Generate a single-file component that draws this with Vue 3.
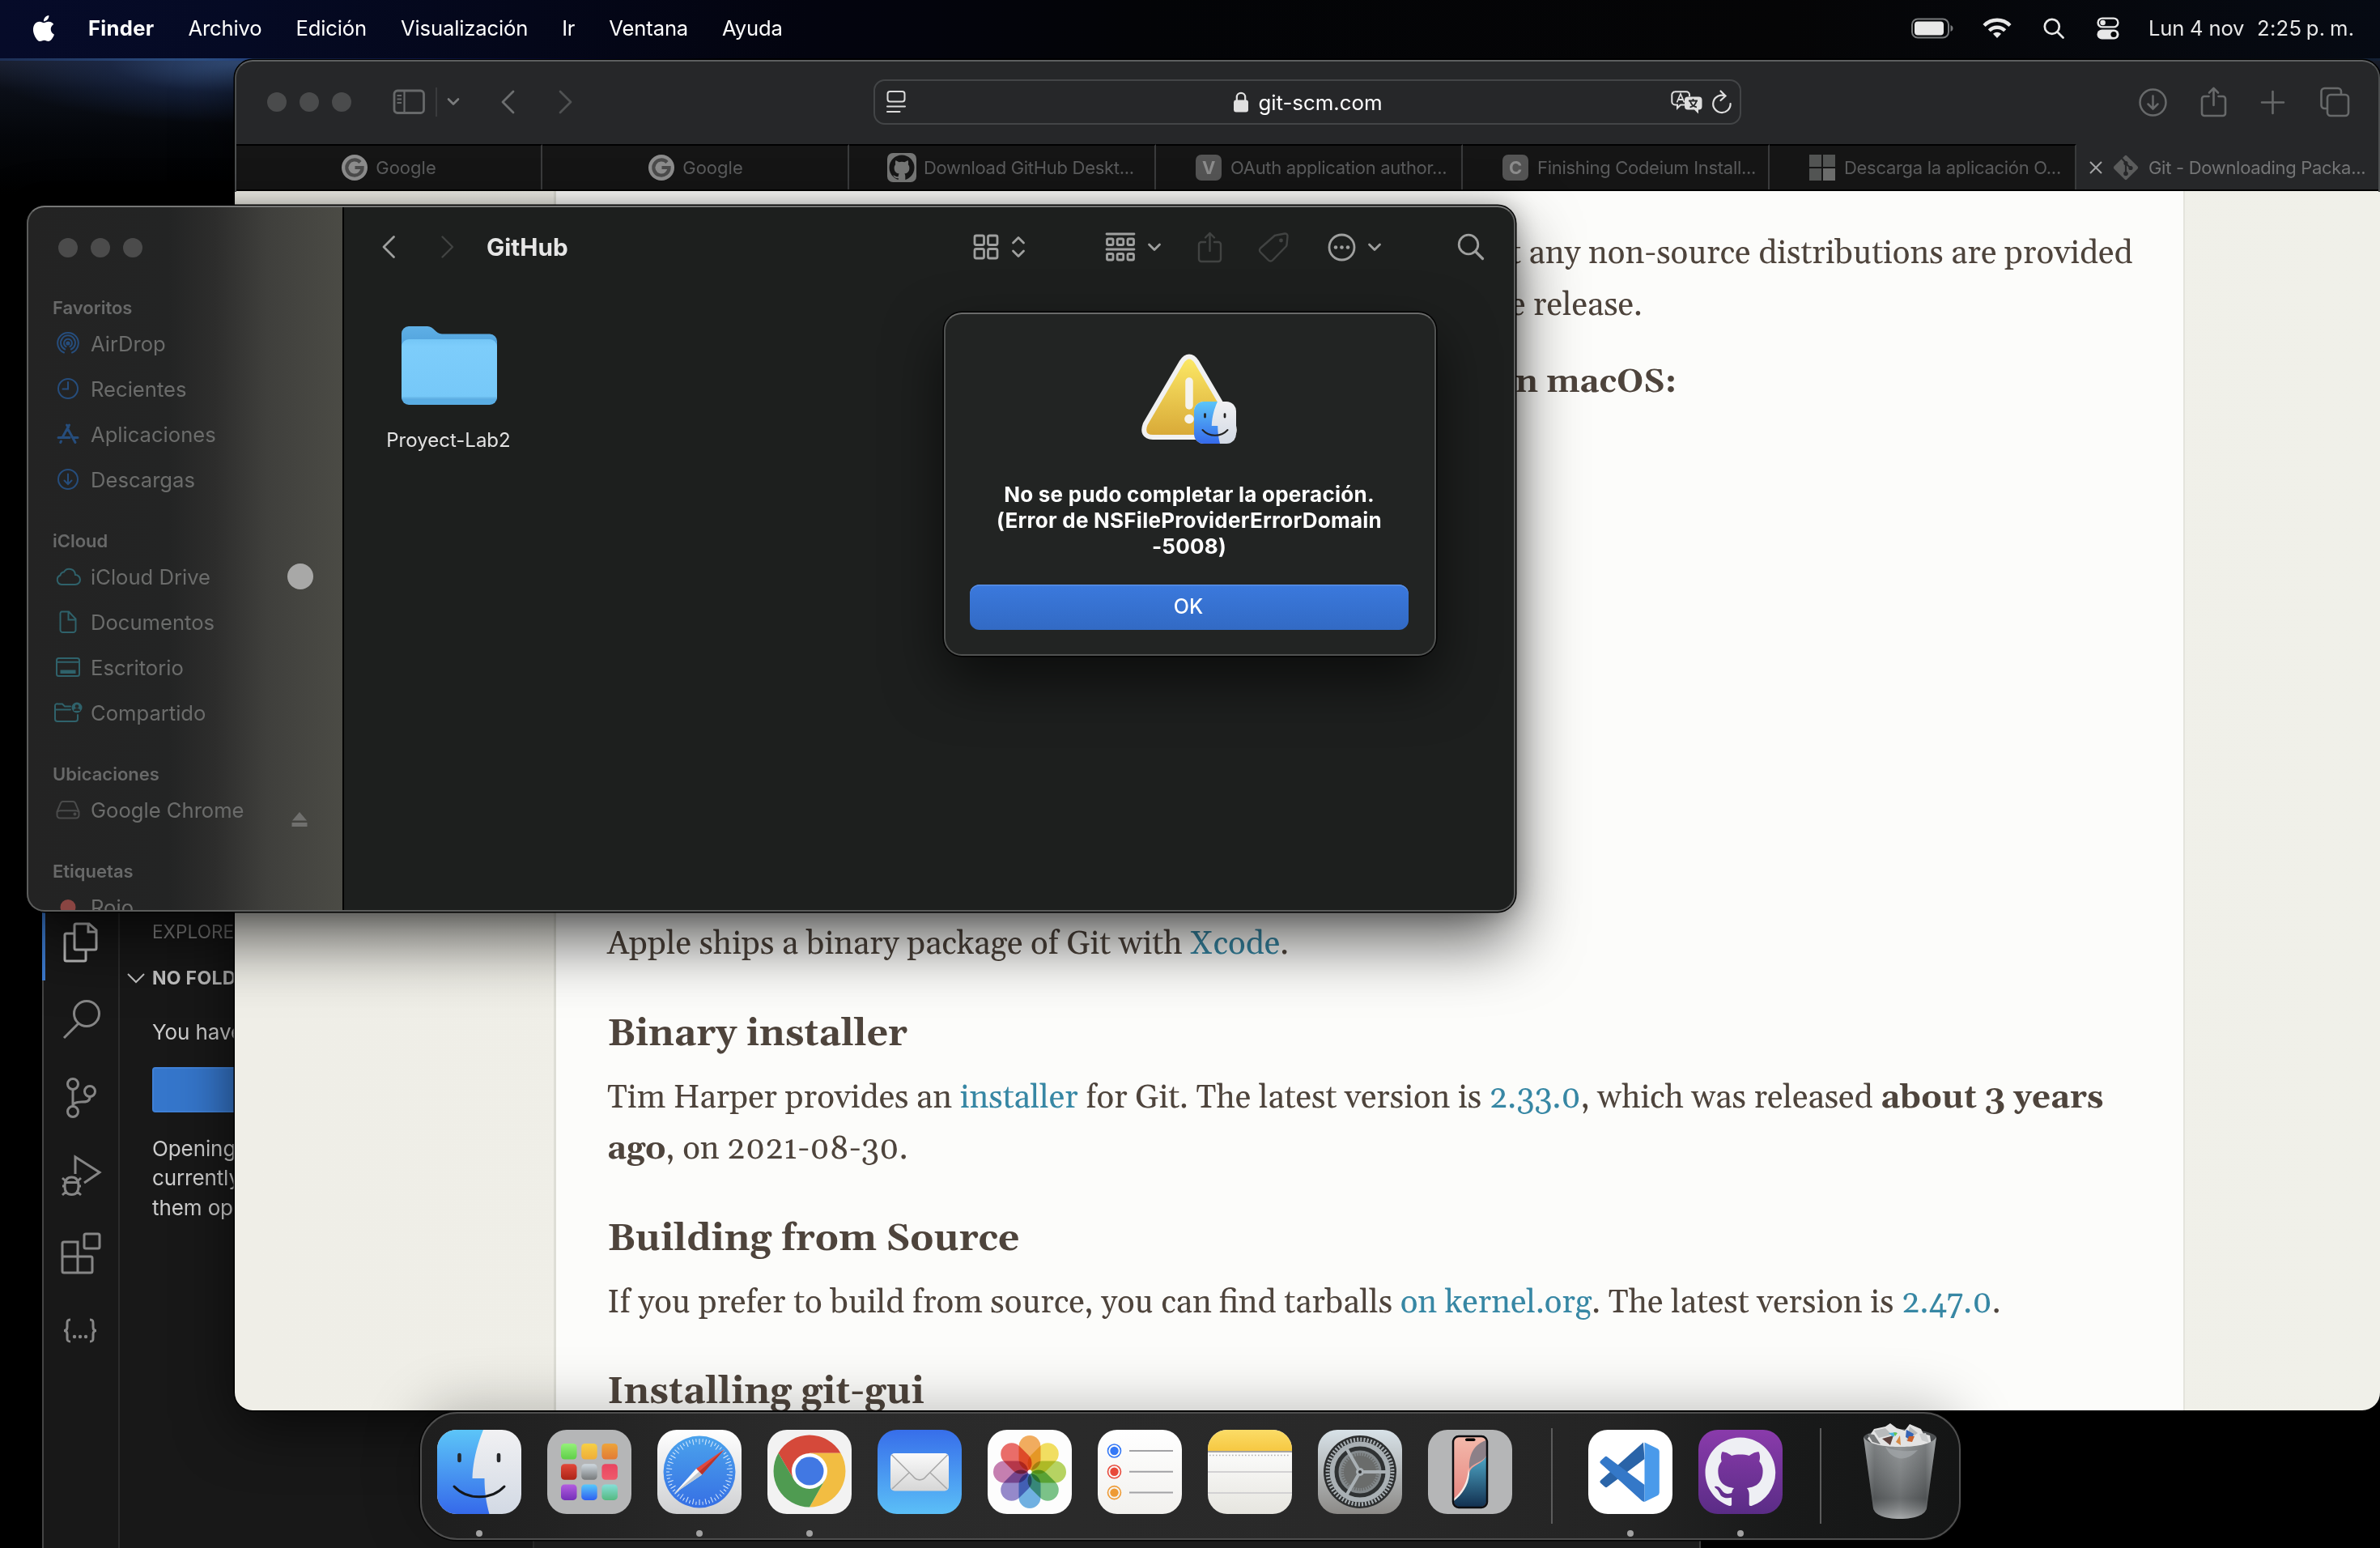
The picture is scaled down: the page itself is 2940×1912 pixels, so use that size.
<script setup>
const menus = ['Archivo', 'Edición', 'Visualización', 'Ir', 'Ventana', 'Ayuda']

const octocat =
  'M8 0C3.58 0 0 3.58 0 8c0 3.54 2.29 6.53 5.47 7.59.4.07.55-.17.55-.38 0-.19-.01-.82-.01-1.49-2.01.37-2.53-.49-2.69-.94-.09-.23-.48-.94-.82-1.13-.28-.15-.68-.52-.01-.53.63-.01 1.08.58 1.23.82.72 1.21 1.87.87 2.33.66.07-.52.28-.87.51-1.07-1.78-.2-3.64-.89-3.64-3.95 0-.87.31-1.59.82-2.15-.08-.2-.36-1.02.08-2.12 0 0 .67-.21 2.2.82.64-.18 1.32-.27 2-.27s1.36.09 2 .27c1.53-1.04 2.2-.82 2.2-.82.44 1.1.16 1.92.08 2.12.51.56.82 1.27.82 2.15 0 3.07-1.87 3.75-3.65 3.95.29.25.54.73.54 1.48 0 1.07-.01 1.93-.01 2.2 0 .21.15.46.55.38A8.01 8.01 0 0 0 16 8c0-4.42-3.58-8-8-8z'

const tabs = [
  { icon: 'google', title: 'Google' },
  { icon: 'google', title: 'Google' },
  { icon: 'github', title: 'Download GitHub Deskt...' },
  { icon: 'letter', letter: 'V', title: 'OAuth application author...' },
  { icon: 'letter', letter: 'C', title: 'Finishing Codeium Install...' },
  { icon: 'windows', title: 'Descarga la aplicación O...' },
  { icon: 'git', title: 'Git - Downloading Packa...', active: true },
]

const circle = '<circle cx="15" cy="15" r="12"/>'
const groups = [
  {
    title: 'Favoritos',
    tone: 'blue',
    items: [
      {
        label: 'AirDrop',
        icon: '<path d="M10 26.5a12.8 12.8 0 1 1 10 0M11.2 22.5a9 9 0 1 1 7.600 0M12.500 19.200a5 5 0 1 1 5 0"/><circle cx="15" cy="15" r="1.600" fill="currentColor"/>',
      },
      { label: 'Recientes', icon: circle + '<path d="M15 7v8.500H8.500"/>' },
      {
        label: 'Aplicaciones',
        icon: '<g stroke-width="3"><path d="M13.500 4l2 3M16.500 4L8.500 18.500M3 19.500h14M21 19.500h6M15.500 10l8.500 15.500M6.500 24l-.8 1.500"/></g>',
      },
      { label: 'Descargas', icon: circle + '<path d="M15 8.500v12M10.500 16.500l4.500 4.500 4.500-4.500"/>' },
    ],
  },
  {
    title: 'iCloud',
    tone: 'teal',
    items: [
      {
        label: 'iCloud Drive',
        extra: 'dot',
        icon: '<path d="M7 25a6 6 0 0 1-1.500-11.500A5 5 0 0 1 10 9.500a7.500 7.500 0 0 1 14 3.500 6 6 0 0 1 0 12z"/>',
      },
      {
        label: 'Documentos',
        icon: '<path d="M7 2.500h9l8.500 9V25a3 3 0 0 1-3 3H8.500a3 3 0 0 1-3-3V5a2.500 2.500 0 0 1 1.500-2.500zM15.500 3v9.500H24"/>',
      },
      {
        label: 'Escritorio',
        icon: '<rect x="1" y="4" width="28" height="22" rx="2.500"/><path d="M1 8.800h28"/><rect x="6.500" y="19.500" width="17" height="2.500" fill="currentColor"/>',
      },
      {
        label: 'Compartido',
        icon: '<path d="M18 7.500h-7L8 4.500H2.500A2.500 2.500 0 0 0-1 7v16a3 3 0 0 0 3 3h22a3 3 0 0 0 3-3v-5M0 11.500h18"/><circle cx="26" cy="9" r="6.500" fill="currentColor" stroke="none"/><g fill="#262827" stroke="none"><circle cx="26" cy="7.500" r="2.300"/><path d="M22 13a4 3 0 0 1 8 0z"/></g>',
      },
    ],
  },
  {
    title: 'Ubicaciones',
    tone: 'gray',
    items: [
      {
        label: 'Google Chrome',
        extra: 'eject',
        icon: '<path d="M8.500 5h13a3 3 0 0 1 2.500 2l4.500 10.500V22a3.500 3.500 0 0 1-3.500 3.500H5A3.500 3.500 0 0 1 1.500 22v-4.500L6 7a3 3 0 0 1 2.500-2zM2 17.500c1-.8 2-1.300 3.500-1.300h19c1.500 0 2.500.5 3.500 1.300"/><circle cx="23.500" cy="20.500" r="1" fill="currentColor"/>',
      },
    ],
  },
  { title: 'Etiquetas', tone: 'red', items: [{ label: 'Rojo', icon: '<circle cx="15" cy="15.500" r="9.500" fill="currentColor" stroke="none"/>' }] },
]

const activity = [
  '<path d="M17 15V5a2 2 0 0 1 2-2h16l9 8v22a2 2 0 0 1-2 2H19a2 2 0 0 1-2-2V15H7a2 2 0 0 0-2 2v30a2 2 0 0 0 2 2h22a2 2 0 0 0 2-2V36M34 3v10h10"/>',
  '<circle cx="32" cy="18" r="15.500"/><path d="M22 30L4 48"/>',
  '<circle cx="15" cy="9" r="6.500"/><circle cx="15" cy="43" r="6.500"/><circle cx="36" cy="18" r="6.500"/><path d="M15 16v20M36 25c0 6-5 6-10 6s-11 1-11 5"/>',
  '<path d="M18 24V3l30 19-19 13"/><path d="M5 39c0-7 3-11 8.500-11S22 32 22 39s-3 10.500-8.500 10.500S5 46 5 39zM5 34.500h17M2 39h3M22 39h3M2 29l4.500 4M25 29l-4.500 4M2 50l4.500-4M25 50l-4.500-4"/>',
  '<path d="M4 12h17v18h16a2 2 0 0 1 2 2v16a2 2 0 0 1-2 2H4a2 2 0 0 1-2-2V14a2 2 0 0 1 2-2zM2 30h19v20M21 30V14"/><rect x="29" y="2" width="19" height="18" rx="2"/>',
  '<path d="M12 12c-4 0-4 2-4 5v4c0 3-1 4.500-4 4.500 3 0 4 1.500 4 4.500v4c0 3 0 5 4 5M36 12c4 0 4 2 4 5v4c0 3 1 4.500 4 4.500-3 0-4 1.500-4 4.500v4c0 3 0 5-4 5"/><g fill="currentColor" stroke="none"><circle cx="17" cy="33" r="2.200"/><circle cx="24" cy="33" r="2.200"/><circle cx="31" cy="33" r="2.200"/></g>',
]

const ticks = Array.from({ length: 60 }, (_, i) => i * 6)
const petals = ['#f09a38', '#f0d93a', '#a6cb3c', '#5bb56b', '#4d9fdc', '#7c6cc0', '#b9609f', '#e64a45']
const launchpad = [
  ['#95f07a', '#5fcf48'], ['#f6cf45', '#efae38'], ['#eda43a', '#e27b35'],
  ['#e2483a', '#ac2417'], ['#cfd8df', '#777a7b'], ['#e94560', '#ef5b6c'],
  ['#b35de0', '#7430b8'], ['#58c9fb', '#2f5ff0'], ['#86dfd8', '#55b981'],
]
const reminders = ['#3478f6', '#e8493a', '#ee9a33']
</script>

<template>
  <div class="desktop">
    <!-- Menu bar -->
    <header class="menubar">
      <svg class="apple" viewBox="0 0 24 24"><path fill="#fff" d="M12.152 6.896c-.948 0-2.415-1.078-3.960-1.040-2.040.027-3.910 1.183-4.961 3.014-2.117 3.675-.546 9.103 1.519 12.090 1.013 1.454 2.208 3.090 3.792 3.039 1.520-.065 2.090-.987 3.935-.987 1.831 0 2.350.987 3.960.948 1.637-.026 2.676-1.480 3.676-2.948 1.156-1.688 1.636-3.325 1.662-3.415-.039-.013-3.182-1.221-3.220-4.857-.026-3.040 2.480-4.494 2.597-4.559-1.429-2.090-3.623-2.324-4.390-2.376-2-.156-3.675 1.090-4.610 1.090zM15.530 3.830c.843-1.012 1.400-2.427 1.245-3.830-1.207.052-2.662.805-3.532 1.818-.780.896-1.454 2.338-1.273 3.714 1.338.104 2.715-.688 3.559-1.701" /></svg>
      <span class="app-name">Finder</span>
      <span v-for="m in menus" :key="m">{{ m }}</span>
      <div class="status">
        <svg width="52" height="26" viewBox="0 0 52 26"><rect x="1" y="1.500" width="45" height="23" rx="7" fill="none" stroke="#77797b" stroke-width="2" /><rect x="4" y="4.500" width="36" height="17" rx="4" fill="#e8e8e8" /><path d="M48.500 9v8c2-.7 3-2 3-4s-1-3.300-3-4z" fill="#77797b" /></svg>
        <svg class="wifi" width="36" height="27" viewBox="0 0 36 27"><g fill="none" stroke="#e8e8e8" stroke-width="4.400"><path d="M2 10.500a22.500 22.500 0 0 1 32 0" /><path d="M8.300 16.800a13.700 13.700 0 0 1 19.400 0" /></g><path d="M18 26l-5-5.300a7.200 7.200 0 0 1 10 0z" fill="#e8e8e8" /></svg>
        <svg class="find" width="26" height="26" viewBox="0 0 26 26"><g fill="none" stroke="#e8e8e8" stroke-width="2.700" stroke-linecap="round"><circle cx="10.800" cy="10.800" r="9" /><path d="M17.500 17.500l7 7" /></g></svg>
        <svg class="cc" width="28" height="28" viewBox="0 0 28 28"><rect x="1.600" y="1.600" width="24.800" height="10.800" rx="5.400" fill="none" stroke="#e8e8e8" stroke-width="2.400" /><circle cx="7.600" cy="7" r="3.300" fill="#e8e8e8" /><rect x=".5" y="15.500" width="27" height="12" rx="6" fill="#e8e8e8" /><circle cx="21" cy="21.500" r="3.600" fill="#050608" /></svg>
        <span class="date">Lun 4 nov</span>
        <span class="time">2:25 p. m.</span>
      </div>
    </header>

    <!-- Code editor behind the other windows -->
    <section class="editor">
      <nav class="activity">
        <svg v-for="(a, i) in activity" :key="i" :class="{ current: i === 0 }" width="50" height="52" viewBox="0 0 50 52" v-html="a" />
      </nav>
      <div class="explorer">
        <div class="ex-title">EXPLORER</div>
        <div class="ex-section">
          <svg width="22" height="14" viewBox="0 0 22 14"><path d="M1 2l10 10L21 2" fill="none" stroke="#c4c4c4" stroke-width="2" /></svg>
          <b>NO FOLDER</b>
        </div>
        <p class="ex-note">You have</p>
        <div class="ex-button"></div>
        <p class="ex-text">Opening<br />currently<br />them open</p>
      </div>
      <div class="editor-main"></div>
    </section>

    <!-- Safari -->
    <section class="safari">
      <div class="toolbar">
        <i class="light"></i><i class="light"></i><i class="light"></i>
        <svg class="t-side" width="42" height="34" viewBox="0 0 42 34"><g fill="none" stroke="#67696a" stroke-width="2.800"><rect x="3" y="3" width="36.500" height="27.500" rx="4" /><path d="M15.500 3v27.500" stroke-width="2.200" /><path d="M6.500 9h5.500M6.500 13.500h5.500M6.500 18h5.500" stroke-width="1.800" /></g></svg>
        <i class="t-rule"></i>
        <svg class="t-drop" width="16" height="12" viewBox="0 0 16 12"><path d="M2 2.500l6 6 6-6" fill="none" stroke="#7b7d7e" stroke-width="2.600" stroke-linecap="round" stroke-linejoin="round" /></svg>
        <svg class="t-back" width="18" height="30" viewBox="0 0 18 30"><path d="M16 2L3 15l13 13" fill="none" stroke="#6d6f70" stroke-width="2.800" stroke-linecap="round" stroke-linejoin="round" /></svg>
        <svg class="t-fwd" width="18" height="30" viewBox="0 0 18 30"><path d="M2 2l13 13L2 28" fill="none" stroke="#505253" stroke-width="2.800" stroke-linecap="round" stroke-linejoin="round" /></svg>
        <div class="address">
          <svg width="24" height="28" viewBox="0 0 24 28"><g fill="none" stroke="#dcdcdc" stroke-width="2"><rect x="1.500" y="1" width="21" height="12.500" rx="3" /><path d="M1 19.500h22M1 26h15.500" stroke-linecap="round" /></g></svg>
          <div class="host">
            <svg width="20" height="26" viewBox="0 0 20 26"><rect x="1" y="10.500" width="18" height="15" rx="3" fill="#e0e0e0" /><path d="M4.800 11V7a5.200 5.200 0 0 1 10.400 0v4" fill="none" stroke="#e0e0e0" stroke-width="2.200" /></svg>
            <span>git-scm.com</span>
          </div>
          <svg width="40" height="29" viewBox="0 0 40 29"><path d="M5 1.300h14a4 4 0 0 1 4 4v2M17 17.500h-5l-4 4v-4H5.300a4 4 0 0 1-4-4V5.300a4 4 0 0 1 4-4" fill="none" stroke="#dedede" stroke-width="2" /><path d="M7.500 14.500L12 4l4.500 10.500M9 11h6" fill="none" stroke="#dedede" stroke-width="1.800" /><path d="M21 7.500h13.500a4 4 0 0 1 4 4v8a4 4 0 0 1-4 4H34v5l-5-5h-8a4 4 0 0 1-4-4v-8a4 4 0 0 1 4-4z" fill="#dedede" /><path d="M22 12.500h11M27.500 10v2.500M24 13c1 4 4 6.500 8 7.500M31.500 13c-1 4-4 6.500-8 7.500" fill="none" stroke="#262729" stroke-width="1.800" /></svg>
          <svg class="reload" width="26" height="30" viewBox="0 0 26 30"><path d="M17 7.500A10.700 10.700 0 1 0 23.600 17M11.500 1.500l6 6-6 5.500" fill="none" stroke="#dedede" stroke-width="2.200" stroke-linecap="round" /></svg>
        </div>
        <svg class="t-down" width="37" height="37" viewBox="0 0 37 37"><g fill="none" stroke="#67696a" stroke-width="2.500" stroke-linecap="round"><circle cx="18.500" cy="18.500" r="16" /><path d="M18.500 10.500v15.500M12.500 20.500l6 6 6-6" /></g></svg>
        <svg class="t-share" width="35" height="40" viewBox="0 0 35 40"><g fill="none" stroke="#67696a" stroke-width="2.600" stroke-linecap="round" stroke-linejoin="round"><path d="M11.500 13H6a3 3 0 0 0-3 3v18a3 3 0 0 0 3 3h23a3 3 0 0 0 3-3V16a3 3 0 0 0-3-3h-5.500M17.500 24V3M12 8.500L17.500 3 23 8.500" /></g></svg>
        <svg class="t-plus" width="31" height="31" viewBox="0 0 31 31"><path d="M15.500 2v27M2 15.500h27" fill="none" stroke="#67696a" stroke-width="2.600" stroke-linecap="round" /></svg>
        <svg class="t-tabs" width="38" height="38" viewBox="0 0 38 38"><g fill="none" stroke="#67696a" stroke-width="2.600"><path d="M10 27H6.500A4 4 0 0 1 2.500 23V6a4 4 0 0 1 4-4H23a4 4 0 0 1 4 4v3" /><rect x="10" y="10" width="26" height="26" rx="4" /></g></svg>
      </div>
      <div class="tabs">
        <div v-for="(t, i) in tabs" :key="i" class="tab" :class="[t.icon, { active: t.active }]">
          <svg v-if="t.active" class="close" width="18" height="18" viewBox="0 0 18 18"><path d="M2 2l14 14M16 2L2 16" stroke="#a3a4a5" stroke-width="2" /></svg>
          <svg width="36" height="36" viewBox="0 0 36 36">
            <template v-if="t.icon === 'google'">
              <circle cx="18" cy="18" r="16" fill="#8c8c8c" />
              <path d="M25 11.500A9.600 9.600 0 1 0 27.600 18H18.500" fill="none" stroke="#4b4b4b" stroke-width="4.200" />
            </template>
            <template v-else-if="t.icon === 'github'">
              <rect width="36" height="36" rx="7" fill="#757675" />
              <circle cx="18" cy="18" r="15.500" fill="#151515" />
              <path d="M10.500 9l4 2.200a14 14 0 0 1 7 0l4-2.200c.8 2 .7 3.500.3 5 1.500 2 1.700 3.500 1.500 5.500-.4 4-2.800 5.500-6 6 .8 1 1 2 1 3.500V35h-8.600v-4c-4 .7-5-1.500-6.700-3.500 3 0 3 2.500 6.700 1.500.1-1.500.4-2.500 1-3.500-3.200-.5-5.600-2-6-6-.2-2 0-3.500 1.500-5.500-.4-1.500-.5-3 .3-5z" fill="#757675" />
            </template>
            <template v-else-if="t.icon === 'letter'">
              <rect x="2" y="2" width="32" height="32" rx="7" fill="#545454" />
              <text x="18" y="26" text-anchor="middle" class="glyph">{{ t.letter }}</text>
            </template>
            <template v-else-if="t.icon === 'windows'">
              <path d="M2 2h15v15H2zM19 2h15v15H19zM2 19h15v15H2z" fill="#525453" />
              <path d="M19 19h15v15H19z" fill="#6b6c6b" />
            </template>
            <template v-else>
              <rect x="6.700" y="6.700" width="22.600" height="22.600" rx="2" transform="rotate(45 18 18)" fill="#5b5c5c" />
              <path d="M13 6.500l5 5.500v14M18 13l6 5.500" fill="none" stroke="#262729" stroke-width="2.200" />
              <g fill="#262729"><circle cx="18" cy="12.500" r="2.600" /><circle cx="18" cy="25.500" r="2.800" /><circle cx="24" cy="18.500" r="2.600" /></g>
            </template>
          </svg>
          <span>{{ t.title }}</span>
        </div>
      </div>
      <div class="page">
        <article>
          <p class="intro">t any non-source distributions are provided<br />e release.</p>
          <h4>n macOS:</h4>
          <p class="apple-line">Apple ships a binary package of Git with <a>Xcode</a>.</p>
          <h3>Binary installer</h3>
          <p>Tim Harper provides an <a>installer</a> for Git. The latest version is <a>2.33.0</a>, which was released <b>about 3 years</b><br /><b>ago</b>, on 2021-08-30.</p>
          <h3>Building from Source</h3>
          <p>If you prefer to build from source, you can find tarballs <a>on kernel.org</a>. The latest version is <a>2.47.0</a>.</p>
          <h3>Installing git-gui</h3>
        </article>
      </div>
    </section>

    <!-- Finder -->
    <section class="finder">
      <aside>
        <div class="lights"><i class="light"></i><i class="light"></i><i class="light"></i></div>
        <div v-for="g in groups" :key="g.title" class="group" :class="g.tone">
          <h5>{{ g.title }}</h5>
          <div v-for="it in g.items" :key="it.label" class="entry">
            <svg width="30" height="30" viewBox="0 0 30 30" v-html="it.icon" />
            <span>{{ it.label }}</span>
            <i v-if="it.extra === 'dot'" class="dot"></i>
            <svg v-if="it.extra === 'eject'" class="eject" width="20" height="20" viewBox="0 0 20 20"><path d="M10 1l9 10.500H1zM.5 14h19v5H.5z" /></svg>
          </div>
        </div>
      </aside>
      <main>
        <div class="f-bar">
          <svg class="f-back" width="18" height="30" viewBox="0 0 18 30"><path d="M15.500 2.500L3 15l12.500 12.500" /></svg>
          <svg class="f-fwd faint" width="18" height="30" viewBox="0 0 18 30"><path d="M2.500 2.500L15 15 2.500 27.500" /></svg>
          <strong>GitHub</strong>
          <svg class="f-grid" width="32" height="32" viewBox="0 0 32 32"><rect x="2" y="2" width="11.500" height="11.500" rx="2" /><rect x="18.500" y="2" width="11.500" height="11.500" rx="2" /><rect x="2" y="18.500" width="11.500" height="11.500" rx="2" /><rect x="18.500" y="18.500" width="11.500" height="11.500" rx="2" /></svg>
          <svg class="f-ud" width="18" height="28" viewBox="0 0 18 28"><path d="M2.500 9L9 2.500 15.500 9M2.500 19L9 25.500l6.500-6.500" /></svg>
          <svg class="f-group" width="38" height="36" viewBox="0 0 38 36"><path d="M2 2h34M2 21h34" /><rect x="2.500" y="8" width="7.500" height="7.500" rx="1.500" /><rect x="15.200" y="8" width="7.500" height="7.500" rx="1.500" /><rect x="28" y="8" width="7.500" height="7.500" rx="1.500" /><rect x="2.500" y="26.500" width="7.500" height="7.500" rx="1.500" /><rect x="15.200" y="26.500" width="7.500" height="7.500" rx="1.500" /><rect x="28" y="26.500" width="7.500" height="7.500" rx="1.500" /></svg>
          <svg class="f-drop" width="18" height="14" viewBox="0 0 18 14"><path d="M2.500 4L9 10.500 15.500 4" /></svg>
          <svg class="f-share faint" width="31" height="40" viewBox="0 0 31 40"><path d="M10 14H5a3 3 0 0 0-3 3v18a3 3 0 0 0 3 3h21a3 3 0 0 0 3-3V17a3 3 0 0 0-3-3h-5M15.500 25V3M10 8.500L15.500 3 21 8.500" /></svg>
          <svg class="f-tag faint" width="39" height="39" viewBox="0 0 39 39"><path d="M22.500 4.500L33 2.500a3 3 0 0 1 3.500 3.500l-1 10.500a4 4 0 0 1-1 2L18 35.500a3.500 3.500 0 0 1-5 0L3 25.500a3.500 3.500 0 0 1 0-5L20 5.500a4 4 0 0 1 2.500-1z" /><circle cx="28.500" cy="11" r="1.200" /></svg>
          <svg class="f-more" width="35" height="35" viewBox="0 0 35 35"><circle cx="17.500" cy="17.500" r="15.500" /><g stroke="none" fill="#9fa09f"><circle cx="10" cy="17.500" r="2.300" /><circle cx="17.500" cy="17.500" r="2.300" /><circle cx="25" cy="17.500" r="2.300" /></g></svg>
          <svg class="f-drop" width="18" height="14" viewBox="0 0 18 14"><path d="M2.500 4L9 10.500 15.500 4" /></svg>
          <svg class="f-find" width="34" height="34" viewBox="0 0 34 34"><circle cx="14" cy="14" r="11.800" /><path d="M22.500 22.500l9 9" stroke-width="3.200" /></svg>
        </div>
        <div class="folder">
          <svg width="122" height="102" viewBox="0 0 122 102">
            <defs>
              <linearGradient id="fb" x1="0" y1="0" x2="0" y2="1"><stop offset="0" stop-color="#5fb0e6" /><stop offset="1" stop-color="#3f8fd0" /></linearGradient>
              <linearGradient id="ff" x1="0" y1="0" x2="0" y2="1"><stop offset="0" stop-color="#74c6f6" /><stop offset=".12" stop-color="#7dcdfb" /><stop offset="1" stop-color="#76c8f8" /></linearGradient>
            </defs>
            <path d="M2 12a9 9 0 0 1 9-9h23c8 0 10 9.500 18 9.500h59a9 9 0 0 1 9 9V60H2z" fill="url(#fb)" />
            <rect x="2" y="40" width="118" height="60" rx="9" fill="#5aade3" />
            <path d="M11 19h100a9 9 0 0 1 9 9v64H2V28a9 9 0 0 1 9-9z" fill="url(#ff)" />
            <path d="M2 91.500h118" stroke="#66b6e8" stroke-width="2" />
          </svg>
          <span>Proyect-Lab2</span>
        </div>
      </main>

      <div class="dialog">
        <svg width="122" height="118" viewBox="0 0 122 118">
          <defs>
            <linearGradient id="wy" x1="0" y1="0" x2="0" y2="1"><stop offset="0" stop-color="#fbe765" /><stop offset="1" stop-color="#d9aa38" /></linearGradient>
            <linearGradient id="fblue" x1="0" y1="0" x2="0" y2="1"><stop offset="0" stop-color="#5cc5f8" /><stop offset="1" stop-color="#3569ea" /></linearGradient>
            <linearGradient id="fwhite" x1="0" y1="0" x2="0" y2="1"><stop offset="0" stop-color="#f1f1f3" /><stop offset="1" stop-color="#d2d9e4" /></linearGradient>
          </defs>
          <path d="M54 17Q61 6 68 17L112.500 93Q117 105 106 105H16Q5 105 9.500 93Z" fill="none" stroke="#f1f1f1" stroke-width="12" stroke-linejoin="round" />
          <path d="M54 17Q61 6 68 17L112.500 93Q117 105 106 105H16Q5 105 9.500 93Z" fill="url(#wy)" />
          <path d="M61 39v30" stroke="#f5f3ec" stroke-width="9.500" stroke-linecap="round" />
          <circle cx="61" cy="85.500" r="5.800" fill="#f5f3ec" />
          <svg x="67" y="64" width="52" height="52" viewBox="0 0 104 104">
            <rect width="104" height="104" rx="24" fill="url(#fwhite)" />
            <path d="M24 0h34C48 22 44 42 43.500 60h15c0 16 2 30 5.500 44H24A24 24 0 0 1 0 80V24A24 24 0 0 1 24 0z" fill="url(#fblue)" />
            <path d="M27 31v7M76 31v7" stroke="#222" stroke-width="5.500" stroke-linecap="round" />
            <path d="M21 70c16 18 46 18 62 0" fill="none" stroke="#222" stroke-width="4" stroke-linecap="round" />
          </svg>
        </svg>
        <p>No se pudo completar la operación.<br />(Error de NSFileProviderErrorDomain<br />-5008)</p>
        <button>OK</button>
      </div>
    </section>

    <!-- Dock -->
    <footer class="dock">
      <div class="app open">
        <svg viewBox="0 0 104 104">
          <rect width="104" height="104" rx="24" fill="url(#fwhite)" />
          <path d="M24 0h33C48 22 44 42 43.500 60h15c0 16 2 30 6 44H24A24 24 0 0 1 0 80V24A24 24 0 0 1 24 0z" fill="url(#fblue)" />
          <path d="M27.500 31v7M76 31v7" stroke="#26282b" stroke-width="4.600" stroke-linecap="round" />
          <path d="M21 70c16 17 46 17 62 0" fill="none" stroke="#15171a" stroke-width="3" stroke-linecap="round" />
        </svg>
      </div>
      <div class="app">
        <svg viewBox="0 0 104 104">
          <defs><linearGradient v-for="(c, i) in launchpad" :id="'lp' + i" :key="i" x1="0" y1="0" x2="0" y2="1"><stop offset="0" :stop-color="c[0]" /><stop offset="1" :stop-color="c[1]" /></linearGradient></defs>
          <rect width="104" height="104" rx="24" fill="#b5b6b7" />
          <rect v-for="(c, i) in launchpad" :key="i" :x="17 + (i % 3) * 25.200" :y="17 + Math.floor(i / 3) * 25.200" width="19.500" height="19.500" rx="4.500" :fill="`url(#lp${i})`" />
        </svg>
      </div>
      <div class="app open">
        <svg viewBox="0 0 104 104">
          <defs>
            <linearGradient id="sfb" x1="0" y1="0" x2="0" y2="1"><stop offset="0" stop-color="#fff" /><stop offset="1" stop-color="#cfd0d2" /></linearGradient>
            <linearGradient id="sfc" x1="0" y1="0" x2="0" y2="1"><stop offset="0" stop-color="#4ba3ec" /><stop offset="1" stop-color="#366fe4" /></linearGradient>
          </defs>
          <rect width="104" height="104" rx="24" fill="url(#sfb)" />
          <circle cx="52" cy="52" r="44.500" fill="url(#sfc)" />
          <path v-for="(a, i) in ticks" :key="a" :d="i % 2 ? 'M52 11v4' : 'M52 11v7'" :transform="`rotate(${a} 52 52)`" stroke="#dcebfb" stroke-width="1" />
          <path d="M83 24L48 48l7 7.500z" fill="#e0483d" />
          <path d="M83 24L51.500 51.800l3.500 3.700z" fill="#b8342c" />
          <path d="M20.500 79L48 48l7 7.500z" fill="#fbfbfb" />
          <path d="M20.500 79l31-27.200 3.500 3.700z" fill="#c3c9cf" />
        </svg>
      </div>
      <div class="app open">
        <svg viewBox="0 0 104 104">
          <rect width="104" height="104" rx="24" fill="#f2f2f2" />
          <path d="M13.500 28.750A44.500 44.500 0 0 1 90.500 28.750H52V51L32.950 62z" fill="#d5493a" />
          <path d="M90.500 28.750A44.500 44.500 0 0 1 52 95.500L71 62 52 51V28.750z" fill="#f2bd42" />
          <path d="M52 95.500A44.500 44.500 0 0 1 13.500 28.750L33 62l19-11 19 11z" fill="#4f9b51" />
          <circle cx="52" cy="51" r="22" fill="#fff" />
          <circle cx="52" cy="51" r="17.500" fill="#4178e3" />
        </svg>
      </div>
      <div class="app">
        <svg viewBox="0 0 104 104">
          <defs>
            <linearGradient id="mlb" x1="0" y1="0" x2="0" y2="1"><stop offset="0" stop-color="#376eea" /><stop offset="1" stop-color="#5bbff7" /></linearGradient>
            <linearGradient id="mle" x1="0" y1="0" x2="0" y2="1"><stop offset="0" stop-color="#fafafa" /><stop offset="1" stop-color="#d6d6d6" /></linearGradient>
          </defs>
          <rect width="104" height="104" rx="24" fill="url(#mlb)" />
          <rect x="16" y="29" width="72" height="46.500" rx="5" fill="url(#mle)" />
          <g fill="none" stroke="#a9a9a9" stroke-width="1.600"><path d="M18 73l21-20M86 73L65 53" /><path d="M17.500 31l26 26c5 6.500 12 6.500 17 0l26-26" /></g>
        </svg>
      </div>
      <div class="app">
        <svg viewBox="0 0 104 104">
          <rect width="104" height="104" rx="24" fill="#fdfdfd" />
          <g class="petals"><rect v-for="(c, i) in petals" :key="c" x="38.500" y="7" width="27" height="43" rx="13.500" :fill="c" :transform="`rotate(${i * 45} 52 52)`" /></g>
          <circle cx="52" cy="52" r="2.500" fill="#fff" />
        </svg>
      </div>
      <div class="app">
        <svg viewBox="0 0 104 104">
          <rect width="104" height="104" rx="24" fill="url(#rmb)" />
          <defs><linearGradient id="rmb" x1="0" y1="0" x2="0" y2="1"><stop offset="0" stop-color="#fff" /><stop offset="1" stop-color="#f2f1ee" /></linearGradient></defs>
          <template v-for="(c, i) in reminders" :key="c">
            <circle cx="20.500" :cy="26 + i * 25.800" r="8" fill="none" :stroke="c" stroke-width="1.600" />
            <circle cx="20.500" :cy="26 + i * 25.800" r="5.200" :fill="c" />
            <path :d="`M39 ${26 + i * 25.800}h54`" stroke="#a2a2a5" stroke-width="2" />
          </template>
        </svg>
      </div>
      <div class="app">
        <svg viewBox="0 0 104 104">
          <defs>
            <linearGradient id="ntb" x1="0" y1="0" x2="0" y2="1"><stop offset=".3" stop-color="#fafaf9" /><stop offset="1" stop-color="#e6e5df" /></linearGradient>
            <linearGradient id="nty" x1="0" y1="0" x2="0" y2="1"><stop offset="0" stop-color="#fbdc67" /><stop offset="1" stop-color="#f6c842" /></linearGradient>
          </defs>
          <rect width="104" height="104" rx="24" fill="url(#ntb)" />
          <path d="M0 26V24A24 24 0 0 1 24 0h56a24 24 0 0 1 24 24v2z" fill="url(#nty)" />
          <path d="M0 27h104" stroke="#a8a5a0" stroke-width="2" />
          <path d="M2 31.500h100" stroke="#b4b4b4" stroke-width="1.600" stroke-dasharray="1.600 2.400" />
          <path d="M0 52h104M0 78h104" stroke="#d2d1d3" stroke-width="2" />
        </svg>
      </div>
      <div class="app">
        <svg viewBox="0 0 104 104">
          <defs><linearGradient id="stb" x1="0" y1="0" x2="0" y2="1"><stop offset="0" stop-color="#d8e2e8" /><stop offset="1" stop-color="#8c8a87" /></linearGradient></defs>
          <rect width="104" height="104" rx="24" fill="url(#stb)" />
          <circle cx="52" cy="52" r="45" fill="#2c2e2f" />
          <circle cx="52" cy="52" r="40" fill="none" stroke="#a9b0b4" stroke-width="5" stroke-dasharray="2.100 2.088" />
          <circle cx="52" cy="52" r="34.500" fill="#2f3233" stroke="#a9b0b4" stroke-width="6" />
          <circle cx="52" cy="52" r="25" fill="#6a6c6b" stroke="#83898c" stroke-width="3" />
          <circle cx="52" cy="52" r="22" fill="none" stroke="#83898c" stroke-width="4" stroke-dasharray="1.600 1.600" />
          <g stroke="#a9b0b4" stroke-width="4"><path d="M52 52h33M52 52L35.500 23.500M52 52L35.500 80.500" /></g>
          <circle cx="52" cy="52" r="5" fill="#a9b0b4" /><circle cx="52" cy="52" r="2" fill="#2c2e2f" />
        </svg>
      </div>
      <div class="app">
        <svg viewBox="0 0 104 104">
          <defs>
            <linearGradient id="ipt" x1="0" y1="0" x2="0" y2="1"><stop offset="0" stop-color="#f3b9ab" /><stop offset="1" stop-color="#e5817c" /></linearGradient>
            <linearGradient id="ipb" gradientUnits="userSpaceOnUse" x1="0" y1="32" x2="0" y2="95"><stop offset="0" stop-color="#4fa8c8" /><stop offset="1" stop-color="#123050" /></linearGradient>
          </defs>
          <rect width="104" height="104" rx="24" fill="#b5b6b7" />
          <rect x="31" y="8" width="42" height="88" rx="7" fill="url(#ipt)" />
          <path d="M72 13C58 17 50 30 51 48c7-8 17-8 21-16z" fill="#8c8088" />
          <path d="M50 48c-1 16-8 29-18 37v4c9-8 16-18 20-30z" fill="#f5ece8" />
          <path d="M72 33c-8 12-20 10-21 22-1 14-9 25-19 33v1a6 6 0 0 0 6 6h28a6 6 0 0 0 6-6z" fill="url(#ipb)" />
          <rect x="31" y="8" width="42" height="88" rx="7" fill="none" stroke="#0c0d10" stroke-width="2.500" />
          <rect x="46" y="10.500" width="12.500" height="3.600" rx="1.800" fill="#000" />
        </svg>
      </div>
      <i class="sep"></i>
      <div class="app open">
        <svg viewBox="0 0 104 104">
          <rect width="104" height="104" rx="24" fill="#fff" />
          <path d="M68 15.500L69.500 36 23.500 70.500a2.500 2.500 0 0 1-3.300-.2l-4.700-4.300a2.500 2.500 0 0 1 0-3.800z" fill="#2a64a8" />
          <path d="M69.500 89v-21L23.500 33.500a2.500 2.500 0 0 0-3.300.2l-4.700 4.300a2.500 2.500 0 0 0 0 3.800L66 87.500a5 5 0 0 0 3.500 1.500z" fill="#3478c8" />
          <path d="M69.500 15.500l16 7.700a4 4 0 0 1 2.300 3.600v50.800a4 4 0 0 1-2.300 3.600L69.500 89z" fill="#4a9aea" />
        </svg>
      </div>
      <div class="app open">
        <svg viewBox="0 0 104 104">
          <defs><linearGradient id="ghb" x1="0" y1="0" x2="0" y2="1"><stop offset="0" stop-color="#8a3bab" /><stop offset="1" stop-color="#5a2c86" /></linearGradient></defs>
          <rect width="104" height="104" rx="24" fill="url(#ghb)" />
          <path :d="octocat" transform="translate(8.500 9.500) scale(5.420)" fill="#eeeff4" />
        </svg>
      </div>
      <i class="sep two"></i>
      <svg class="trash" width="92" height="120" viewBox="0 0 92 120">
        <defs>
          <linearGradient id="trb" x1="0" y1="0" x2="1" y2="0"><stop offset="0" stop-color="#8d9193" /><stop offset=".15" stop-color="#686c6e" /><stop offset=".5" stop-color="#85898b" /><stop offset=".85" stop-color="#64686a" /><stop offset="1" stop-color="#94989a" /></linearGradient>
          <linearGradient id="trs" x1="0" y1="0" x2="0" y2="1"><stop offset="0" stop-color="#fff" stop-opacity=".15" /><stop offset=".75" stop-color="#000" stop-opacity=".2" /><stop offset="1" stop-color="#fff" stop-opacity=".3" /></linearGradient>
        </defs>
        <ellipse cx="46" cy="19" rx="45" ry="11" fill="#4d5052" />
        <path d="M6 20l8-12 14-3 6-4 8 6 10 3 6-8 14 6 3 6 8 2 2 12-20 7H20z" fill="#e3e3e3" />
        <path d="M14 10l14-3 8 8-16 4zM58 5l10 8-14 10z" fill="#b9bbbc" />
        <path d="M24 20l14-4-4 12z" fill="#5b3f3a" /><path d="M32 13l10-1-4 6z" fill="#49b3dc" /><path d="M38 12l5 1-3 4z" fill="#69c64c" />
        <path d="M54 9l9 5-3 8-7-4z" fill="#3563b5" /><path d="M57 17l7 0-3 7-6-1z" fill="#c8602c" /><path d="M41 24l5-8 1 12z" fill="#d68a45" />
        <path d="M70 14l8-1 4 12-9-3z" fill="#c9cbcc" /><path d="M6 14l6 10 10 3-8-12z" fill="#77797a" />
        <path d="M1 18c6 10 28 12 45 12s39-2 45-12L79 106c-2 8-14 13-33 13s-31-5-33-13z" fill="url(#trb)" />
        <path d="M1 18c6 10 28 12 45 12s39-2 45-12L79 106c-2 8-14 13-33 13s-31-5-33-13z" fill="url(#trs)" />
        <path d="M28 30c6 14 24 22 40 4-8 2-28 2-40-4z" fill="#a3a7a9" opacity=".7" />
      </svg>
    </footer>
  </div>
</template>

<style>
html, body { margin: 0; background: #000; }
</style>

<style scoped>
.desktop {
  position: relative;
  width: 2940px;
  height: 1912px;
  overflow: hidden;
  background:
    linear-gradient(90deg, #1d2f55 0, #2c4f84 250px, #2036a0 520px, #0b0f5c 700px, #020204 900px, #020204 2500px, #16243a 2940px) 0 72px / 100% 3px no-repeat,
    radial-gradient(ellipse 330px 75px at 300px 78px, rgba(60, 95, 150, .75), rgba(30, 50, 95, .45) 50%, transparent),
    linear-gradient(180deg, #1c2130 72px, #0b0f18 110px, #04060a 170px, #010101 240px, #000 300px);
  font-family: Inter, "Liberation Sans", sans-serif;
  box-sizing: border-box;
}
.desktop * { box-sizing: border-box; }
svg { display: block; flex: none; overflow: visible; }
p, h3, h4, h5 { margin: 0; }

/* Menu bar */
.menubar {
  position: absolute;
  z-index: 1;
  inset: 0 0 auto 0;
  height: 72px;
  display: flex;
  align-items: center;
  gap: 42px;
  padding: 0 33px 3px 38px;
  background: linear-gradient(90deg, #060b29 0, #050a24 300px, #03040f 1000px, #030407 1400px, #050506 2200px, #060a13 2940px);
  color: #fff;
  font-size: 25.600px;
  letter-spacing: -.15px;
}
.menubar span { white-space: nowrap; }
.apple { width: 32px; height: 32px; margin-right: -3px; }
.app-name { font-weight: 700; letter-spacing: .3px; }
.status { margin-left: auto; display: flex; align-items: center; color: #e8e8e8; }
.wifi { margin-left: 36px; }
.find { margin-left: 39px; }
.cc { margin-left: 40px; }
.date { margin-left: 36px; width: 134px; letter-spacing: -.2px; }
.time { width: 119px; letter-spacing: .3px; word-spacing: -2px; }

/* Editor */
.editor {
  position: absolute;
  left: 52px;
  top: 1100px;
  width: 2049px;
  height: 830px;
  display: flex;
  background: #181818;
  border: solid #454545;
  border-width: 0 2px;
}
.activity {
  position: relative;
  width: 94px;
  border-right: 2px solid #2b2b2b;
  padding: 38px 0 0 21px;
  display: flex;
  flex-direction: column;
  gap: 44px;
  color: #868686;
}
.activity::before {
  content: "";
  position: absolute;
  left: -2px;
  top: 27px;
  width: 4px;
  height: 84px;
  background: #3c7bd0;
}
.activity svg { fill: none; stroke: currentColor; stroke-width: 3; }
.activity svg.current { color: #c4c4c4; }
.explorer { width: 510px; overflow: hidden; color: #cccccc; white-space: nowrap; }
.ex-title { margin: 36px 0 0 40px; line-height: 30px; font-size: 22.500px; letter-spacing: .1px; color: #8f8f8f; }
.ex-section { margin-top: 27px; height: 30px; display: flex; align-items: center; padding-left: 9px; gap: 9px; font-size: 23px; letter-spacing: .3px; color: #c6c6c6; }
.ex-note { margin: 34px 0 0 40px; line-height: 36px; font-size: 26px; letter-spacing: -.1px; }
.ex-button { margin: 25px 0 0 40px; height: 56px; border: 2px solid #3f80d6; border-radius: 4px; background: #3576cb; }
.ex-text { margin: 27px 0 0 40px; line-height: 36.300px; font-size: 26px; letter-spacing: -.1px; }
.editor-main { flex: 1; background: #1f1f1f; border-left: 2px solid #2b2b2b; }

/* Safari */
.safari {
  position: absolute;
  left: 290px;
  top: 74px;
  width: 2650px;
  height: 1668px;
  border-radius: 22px;
  overflow: hidden;
  background: #262729;
  box-shadow: 0 0 0 1.500px #000, 0 20px 70px rgba(0, 0, 0, .6);
}
.safari::after {
  content: "";
  position: absolute;
  inset: 0 0 auto;
  height: 161px;
  border: 2px solid #5d5f60;
  border-bottom: 0;
  border-left-color: #4b4d4e;
  border-right-color: #4b4d4e;
  border-radius: 22px 22px 0 0;
}
.toolbar { height: 104px; display: flex; align-items: center; padding-left: 40px; }
.light { width: 24px; height: 24px; border-radius: 50%; background: #4a4b4c; flex: none; }
.light + .light { margin-left: 16px; }
.t-side { margin-left: 50px; }
.t-rule { margin-left: 12px; width: 2px; height: 36px; background: #3a3b3d; }
.t-drop { margin-left: 12px; }
.t-back { margin-left: 50px; }
.t-fwd { margin-left: 54px; }
.address {
  margin-left: 371px;
  width: 1072px;
  height: 56px;
  border: 2px solid #434547;
  border-radius: 14px;
  display: flex;
  align-items: center;
  padding: 0 9px 0 14px;
}
.host { flex: 1; display: flex; align-items: center; justify-content: center; gap: 11px; padding-left: 48px; color: #fff; font-size: 25.800px; }
.reload { margin-left: 10px; }
.t-down { margin-left: 490px; }
.t-share { margin-left: 39px; }
.t-plus { margin-left: 40px; }
.t-tabs { margin-left: 42px; }
.tabs { height: 58px; display: flex; padding-left: 1px; background: #151515; border-bottom: 2px solid #000; }
.tab {
  flex: none;
  width: 379px;
  border-right: 2px solid #3a3b3c;
  border-top: 2px solid #000;
  display: flex;
  align-items: center;
  gap: 9px;
  padding-left: 47px;
  color: #5a5b5c;
  font-size: 22px;
  letter-spacing: -.3px;
  white-space: nowrap;
}
.tab.google { padding: 0; justify-content: center; gap: 8px; letter-spacing: 0; }
.tab.active { flex: 1; padding-left: 15px; gap: 10px; border: 0; padding-top: 2px; background: #262729; color: #747576; }
.glyph { font: 700 22px Inter, sans-serif; fill: #8c8c8c; }

.page { height: 1506px; padding: 0 241px 0 394px; background: linear-gradient(90deg, #efeee7, #f0f0e9); }
article {
  height: 100%;
  border-left: 3px solid #deded6;
  border-right: 2px solid #e4e4dc;
  background: #fcfcfa;
  padding: 46px 0 0 63px;
  color: #4e443c;
  font-family: Gelasio, Georgia, "Liberation Serif", serif;
  font-size: 40.200px;
  line-height: 63.500px;
  white-space: nowrap;
}
article a { color: #3787a4; }
.intro { padding-left: 1115px; }
h4 { margin-top: 33px; padding-left: 1122px; font-size: 40.500px; line-height: 60px; }
h3 { font-size: 46px; line-height: 60px; margin: 49px 0 17px; }
.apple-line { margin-top: 633px; }

/* Finder */
.finder {
  position: absolute;
  left: 33px;
  top: 254px;
  width: 1839px;
  height: 872px;
  border-radius: 22px;
  display: flex;
  background: #1d1f1e;
  box-shadow: 0 0 0 1.500px #000, 0 36px 80px rgba(0, 0, 0, .62), 0 0 30px rgba(0, 0, 0, .3);
}
.finder::after {
  content: "";
  position: absolute;
  inset: 0;
  border: 2px solid #5c5d5c;
  border-top-color: #767776;
  border-radius: 22px;
}
aside {
  width: 392px;
  overflow: hidden;
  border-right: 2px solid #000;
  border-radius: 22px 0 0 22px;
  background: linear-gradient(90deg, #232323 0, #232424 45%, #2d2d2c 60%, #3f3f3c 76%, #4b4b45 100%);
  padding: 40px 0 0 32px;
}
aside .light { background: #4b4b4b; }
.lights { display: flex; padding-left: 7px; }
.group { margin-bottom: 33px; }
.group:nth-of-type(2) { margin-top: 47px; }
h5 { height: 30px; line-height: 30px; margin-bottom: 1px; font-size: 22px; font-weight: 600; color: #686969; }
.entry { height: 56px; display: flex; align-items: center; color: #6b6c6b; font-size: 25.600px; }
.entry > svg:first-child { margin: 0 13px 0 4px; fill: none; stroke: currentColor; stroke-width: 2; stroke-linecap: round; }
.blue svg { color: #264d7c; }
.teal svg { color: #2f626b; }
.gray svg { color: #4a4b4b; }
.red svg { color: #8a4542; }
.dot { width: 32px; height: 32px; border-radius: 50%; background: #a8a8a7; margin: 0 36px 0 auto; }
.eject { margin: 24px 43px 0 auto; fill: #70706e; }

main { flex: 1; }
.f-bar { height: 102px; display: flex; align-items: center; padding-left: 46px; }
.f-bar svg { fill: none; stroke: #9fa09f; stroke-width: 2.800; stroke-linecap: round; stroke-linejoin: round; }
.f-bar svg.faint { stroke: #414342; stroke-width: 2.400; }
.f-fwd { margin-left: 55px; }
.f-bar strong { margin-left: 39px; width: 121px; color: #e6e6e6; font-size: 29.700px; font-weight: 700; }
.f-grid { margin-left: 480px; }
.f-ud { margin-left: 15px; }
.f-group { margin-left: 98px; }
.f-drop { margin-left: 14px; }
.f-share { margin-left: 44px; }
.f-tag { margin-left: 44px; }
.f-more { margin-left: 47px; }
.f-find { margin-left: 93px; }
.folder { width: 220px; margin: 44px 0 0 20px; display: flex; flex-direction: column; align-items: center; color: #e2e2e2; font-size: 24px; }
.folder span { margin-top: 26px; line-height: 32px; margin-right: 2px; }

.dialog {
  position: absolute;
  z-index: 1;
  left: 1133px;
  top: 132px;
  width: 608px;
  height: 424px;
  border: 2px solid #505251;
  border-top-color: #6a6b6a;
  border-radius: 22px;
  background: #222423;
  box-shadow: 0 0 0 1.500px #000, 0 30px 70px rgba(0, 0, 0, .6);
  display: flex;
  flex-direction: column;
  align-items: center;
  padding: 44px 32px 0 30px;
  color: #fff;
}
.dialog p { margin-top: 45px; text-align: center; font-size: 26px; letter-spacing: .25px; line-height: 32.200px; font-weight: 700; white-space: nowrap; }
.dialog button {
  margin-top: 30px;
  width: 100%;
  height: 56px;
  border: 0;
  border-radius: 12px;
  background: linear-gradient(#3b79dd, #326ac4);
  box-shadow: inset 0 1.500px 0 #5a90e6;
  color: #fff;
  font: 500 25px Inter, sans-serif;
  padding: 0 2px 2px 0;
}

/* Dock */
.dock {
  position: absolute;
  left: 519px;
  top: 1744px;
  width: 1903px;
  height: 158px;
  border: 2px solid #4e4e4e;
  border-radius: 46px;
  background: linear-gradient(90deg, #1e1e1e 0, #2b2b2b 25%, #292929 60%, #242424 78%, #191a1a 88%, #141515 100%);
  box-shadow: 0 0 0 1.500px #050505, 0 -6px 70px rgba(0, 0, 0, .25);
  display: flex;
  align-items: flex-start;
  gap: 32px;
  padding: 20px 0 0 19px;
}
.app { position: relative; width: 104px; height: 104px; flex: none; }
.app svg { width: 104px; height: 104px; }
.app.open::after {
  content: "";
  position: absolute;
  left: 48px;
  top: 124px;
  width: 8px;
  height: 8px;
  border-radius: 50%;
  background: #a2a2a2;
}
.petals rect { mix-blend-mode: multiply; opacity: .8; }
.sep { width: 2px; height: 118px; margin: -2px 12px 0 16px; background: #5c5c5c; flex: none; }
.sep.two { margin: -2px 19px 0 14px; }
.trash { margin-top: -9px; }
</style>
